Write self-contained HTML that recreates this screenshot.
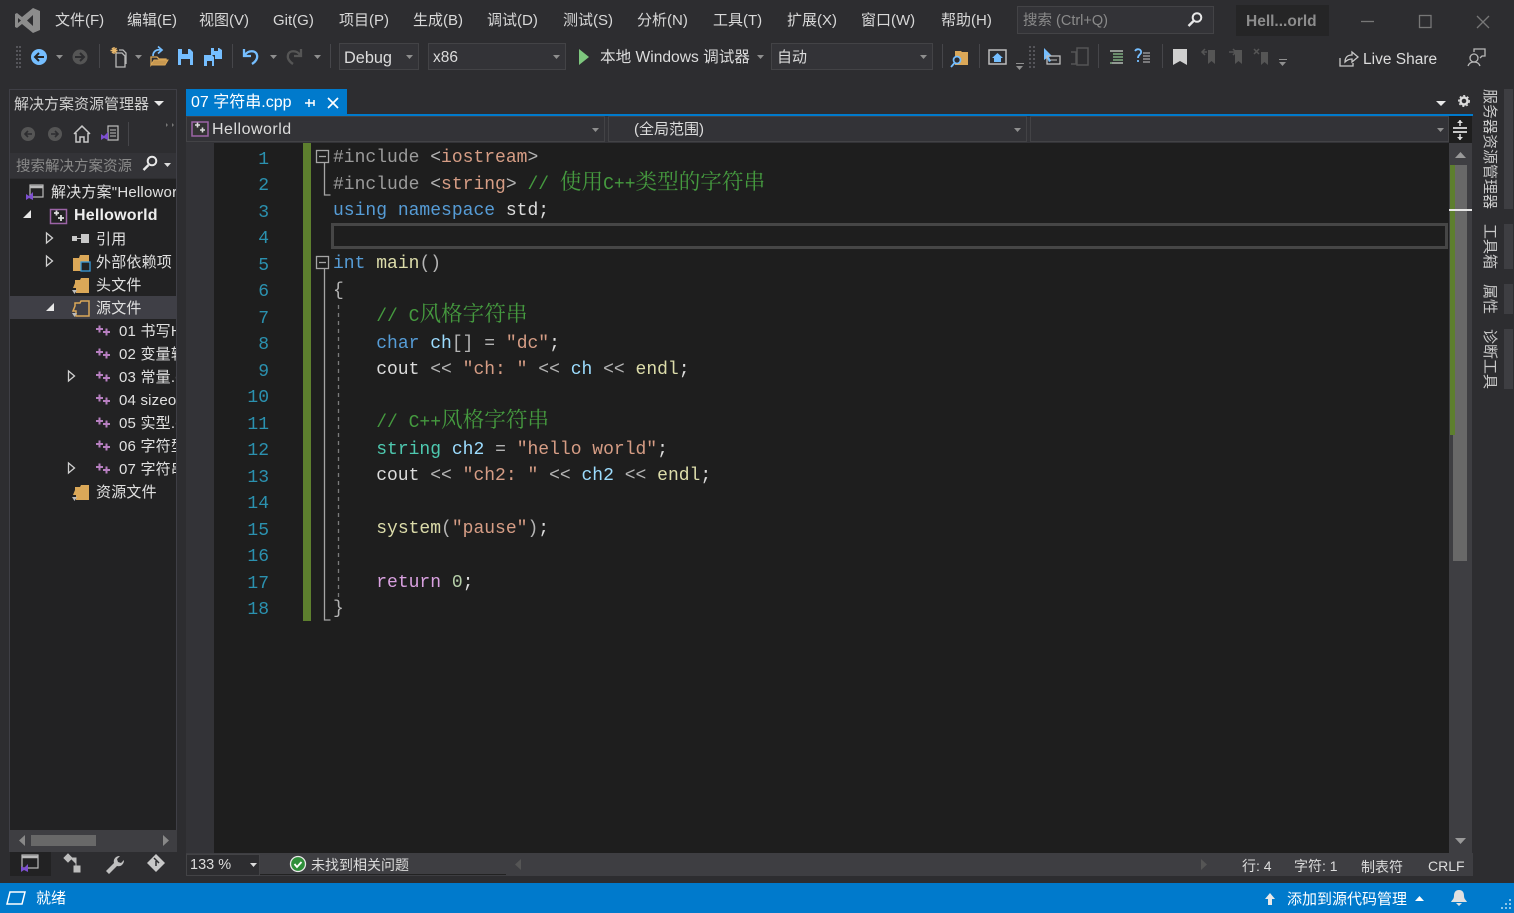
<!DOCTYPE html>
<html><head><meta charset="utf-8">
<style>
html,body{margin:0;padding:0;background:#2d2d30;width:1514px;height:913px;overflow:hidden}
body{position:relative;font-family:"Liberation Sans","Noto Sans CJK SC",sans-serif;color:#dcdcdc;font-size:14.5px}
.b{position:absolute}
.t{position:absolute;white-space:nowrap;line-height:20px}
.m .t{top:11px;color:#d8d8d8;font-size:15px}
.dd{position:absolute;background:#333337;border:1px solid #434346;box-sizing:border-box}
.r .t{color:#e0e0e0;font-size:15px;letter-spacing:.2px}
.l{position:absolute;left:333px;white-space:pre;font-family:"Liberation Mono","Noto Serif CJK SC",monospace;font-size:18px;line-height:27px;color:#dcdcdc}
.n{position:absolute;left:230px;width:39px;text-align:right;font-family:"Liberation Mono",monospace;font-size:18px;line-height:27px;color:#2b91af}
.k{color:#569cd6}.p{color:#9b9b9b}.s{color:#d69d85}.c{color:#459a3f}.f{color:#dcdcaa}.v{color:#9cdcfe}.y{color:#4ec9b0}.o{color:#b4b4b4}.q{color:#d8a0df}.u{color:#b5cea8}
.z{font-family:"Noto Serif CJK SC",serif;font-size:21.6px;line-height:0}
.v1{position:absolute;left:1480px;writing-mode:vertical-rl;text-orientation:sideways;font-size:15px;line-height:18px;color:#c8c8c8;white-space:nowrap}
</style></head><body>

<!-- solution panel -->
<div class="b" style="left:9px;top:89px;width:168px;height:763px;border:1px solid #3f3f46;box-sizing:border-box;border-bottom:0"></div>
<div class="b" style="left:10px;top:153px;width:166px;height:25px;background:#333337"></div>
<div class="b" style="left:10px;top:179px;width:166px;height:651px;background:#222223"></div>
<div class="b" style="left:10px;top:296px;width:166px;height:23px;background:#3f3f46"></div>
<div class="b" style="left:10px;top:830px;width:167px;height:22px;background:#3e3e42"></div>
<div class="b" style="left:31px;top:835px;width:65px;height:11px;background:#686868"></div>
<div class="b" style="left:10px;top:852px;width:41px;height:24px;background:#222223"></div>

<!-- document well -->
<div class="b" style="left:186px;top:89px;width:161px;height:25px;background:#007acc"></div>
<div class="b" style="left:186px;top:114px;width:1287px;height:2px;background:#007acc"></div>
<div class="b" style="left:186px;top:116px;width:1263px;height:27px;background:#333337"></div>
<div class="dd" style="left:186px;top:116px;width:419px;height:26px"></div>
<div class="dd" style="left:608px;top:116px;width:419px;height:26px"></div>
<div class="dd" style="left:1030px;top:116px;width:419px;height:26px"></div>
<div class="b" style="left:1449px;top:116px;width:23px;height:27px;background:#1e1e1e"></div>
<div class="b" style="left:186px;top:143px;width:28px;height:710px;background:#333337"></div>
<div class="b" style="left:214px;top:143px;width:1235px;height:710px;background:#1e1e1e"></div>
<div class="b" style="left:303px;top:143px;width:8px;height:478px;background:#5d7f2e"></div>
<div class="b" style="left:331px;top:223px;width:1117px;height:26px;border:3px solid #464646;box-sizing:border-box"></div>

<!-- scrollbar -->
<div class="b" style="left:1449px;top:143px;width:23px;height:710px;background:#3e3e42"></div>
<div class="b" style="left:1453px;top:165px;width:14px;height:396px;background:#686868"></div>
<div class="b" style="left:1450px;top:165px;width:5px;height:270px;background:#5d7f2e"></div>
<div class="b" style="left:1449px;top:209px;width:23px;height:2px;background:#e8e8e8"></div>

<!-- bottom bar -->
<div class="b" style="left:186px;top:853px;width:1287px;height:23px;background:#3e3e42"></div>
<div class="b" style="left:186px;top:854px;width:74px;height:22px;background:#2d2d30;border:1px solid #434346;box-sizing:border-box"></div>
<div class="b" style="left:260px;top:874px;width:246px;height:1px;background:#222"></div>

<!-- status -->
<div class="b" style="left:0;top:883px;width:1514px;height:30px;background:#007acc"></div>

<!-- top widgets -->
<div class="dd" style="left:1017px;top:6px;width:197px;height:28px"></div>
<div class="b" style="left:1236px;top:5px;width:93px;height:31px;background:#252526"></div>
<div class="dd" style="left:339px;top:43px;width:80px;height:27px"></div>
<div class="dd" style="left:428px;top:43px;width:138px;height:27px"></div>
<div class="dd" style="left:771px;top:43px;width:162px;height:27px"></div>

<!-- right strips -->
<div class="b" style="left:1504px;top:89px;width:9px;height:120px;background:#3e3e42"></div>
<div class="b" style="left:1504px;top:224px;width:9px;height:45px;background:#3e3e42"></div>
<div class="b" style="left:1504px;top:284px;width:9px;height:30px;background:#3e3e42"></div>
<div class="b" style="left:1504px;top:329px;width:9px;height:60px;background:#3e3e42"></div>

<!-- icons -->
<svg class="b" style="left:0;top:0" width="1514" height="913" viewBox="0 0 1514 913" fill="none">
<!-- logo -->
<path fill-rule="evenodd" fill="#8c8c8c" d="M33 8l7 3v19l-7 3-11-9-5 4-2-1V14l2-1 5 4zM33 15l-6 5.500 6 5.500zM18 18v5l3-2.500z"/>
<!-- gripper -->
<g fill="#55555a"><rect x="16" y="46" width="2" height="2"/><rect x="19" y="46" width="2" height="2"/><rect x="16" y="50" width="2" height="2"/><rect x="19" y="50" width="2" height="2"/><rect x="16" y="54" width="2" height="2"/><rect x="19" y="54" width="2" height="2"/><rect x="16" y="58" width="2" height="2"/><rect x="19" y="58" width="2" height="2"/><rect x="16" y="62" width="2" height="2"/><rect x="19" y="62" width="2" height="2"/><rect x="16" y="66" width="2" height="2"/><rect x="19" y="66" width="2" height="2"/>
<rect x="1029" y="46" width="2" height="2"/><rect x="1033" y="46" width="2" height="2"/><rect x="1029" y="50" width="2" height="2"/><rect x="1033" y="50" width="2" height="2"/><rect x="1029" y="54" width="2" height="2"/><rect x="1033" y="54" width="2" height="2"/><rect x="1029" y="58" width="2" height="2"/><rect x="1033" y="58" width="2" height="2"/><rect x="1029" y="62" width="2" height="2"/><rect x="1033" y="62" width="2" height="2"/><rect x="1029" y="66" width="2" height="2"/><rect x="1033" y="66" width="2" height="2"/></g>
<!-- separators -->
<g stroke="#46464a"><path d="M99.500 44v24M232.500 44v24M330.500 44v24M942.500 44v24M979.500 44v24M1098.500 44v24M1162.500 44v24M128.500 122v24"/></g>
<!-- nav -->
<circle cx="39" cy="57" r="8" fill="#75beff"/><path d="M44 57h-8M39 53l-4 4 4 4" stroke="#252526" stroke-width="2"/>
<circle cx="80" cy="57" r="7.500" fill="#555"/><path d="M75 57h8M80 53l4 4-4 4" stroke="#2d2d30" stroke-width="2"/>
<!-- small arrows -->
<g fill="#8f8f8f"><path d="M56 55h7l-3.500 4zM135 55h7l-3.500 4zM270 55h7l-3.500 4zM314 55h7l-3.500 4zM406 55h7l-3.500 4zM553 55h7l-3.500 4zM757 55h7l-3.500 4zM920 55h7l-3.500 4zM592 128h7l-3.500 4zM1014 128h7l-3.500 4zM1437 128h7l-3.500 4z"/></g>
<!-- new project -->
<path d="M116 53h6l3 3v11h-9zM119 50h4l3 3v11" stroke="#b8b8b8" stroke-width="1.300"/><path d="M114 47v7M110.500 50.500h7M112 48l4.500 5M116.500 48l-4.500 5" stroke="#e8b76b" stroke-width="1.400"/>
<!-- open -->
<path d="M151 57h6l2 2h7v3h-13l-2 3v-8z" stroke="#dba858" stroke-width="1.300"/><path d="M151 65l3-5h14l-3 5z" fill="#c89850" stroke="#dba858"/><path d="M153 56c0-5 4-7 8-6M158 46.500l4 3.500-4 3.500" stroke="#75beff" stroke-width="1.700"/>
<!-- save -->
<path d="M178 49h12l3 3v13h-15z" fill="#75beff"/><rect x="182" y="49" width="6" height="5" fill="#2d2d30"/><rect x="181" y="59" width="9" height="6" fill="#2d2d30"/>
<path d="M204 55h8l2 2v9h-10z" fill="#75beff"/><path d="M211 48h8l3 2v9h-7v-4h-4z" fill="#75beff"/><rect x="207" y="61" width="5" height="5" fill="#2d2d30"/><rect x="214" y="48" width="4" height="3" fill="#2d2d30"/>
<!-- undo/redo -->
<path d="M244 49v7h7M245 55c3-5 11-5 12 0 1 4-2 7-5 9" stroke="#75beff" stroke-width="2.300"/>
<path d="M301 49v7h-7M300 55c-3-5-11-5-12 0-1 4 2 7 5 9" stroke="#555" stroke-width="2.300"/>
<!-- run -->
<path d="M579 49l10 8-10 8z" fill="#7ec77e"/>
<!-- find in files -->
<path d="M955 53v-2h6l1 1h6v13h-13z" fill="#dba858"/><circle cx="957" cy="60" r="3.500" stroke="#75beff" stroke-width="1.700" fill="#2d2d30"/><path d="M954.500 63l-3.500 4" stroke="#75beff" stroke-width="1.800"/>
<!-- home window -->
<rect x="989" y="50" width="17" height="14" stroke="#bdbdbd" stroke-width="1.500"/><path d="M992 58l5.500-5 5.500 5h-2v4h-7v-4z" fill="#75beff"/>
<g fill="#8f8f8f"><path d="M1016 63h8v1h-8zM1016 66h7l-3.500 4zM1279 59h8v1h-8zM1279 62h7l-3.500 4z"/></g>
<!-- pointer-box -->
<path d="M1044 48v12l3-2 2 4 2-1-2-4 3-1z" fill="#75beff"/><rect x="1047" y="56" width="13" height="8" stroke="#bdbdbd" stroke-width="1.300"/><path d="M1050 60h7" stroke="#bdbdbd"/>
<path d="M1071 52h5v12h-5M1077 48h11v17h-11z" stroke="#555" stroke-width="1.500"/>
<!-- comment lines -->
<path d="M1110 51h13M1113 54h10M1113 57h10M1113 60h10M1110 63h13" stroke="#8fc78f" stroke-width="1.300"/><path d="M1110 51h13M1112 63h11" stroke="#ddd"/>
<path d="M1135 51c2-3 7-2 6 2-1 2-3 2-3 5M1138 60v2" stroke="#75beff" stroke-width="1.800"/><path d="M1143 53h7M1143 56h7M1143 59h7M1143 62h7" stroke="#c8c8c8"/>
<!-- bookmarks -->
<path d="M1173 49h14v16l-7-4-7 4z" fill="#d0d0d0"/>
<path d="M1208 50h7v14l-3.500-3-3.500 3zM1235 50h7v14l-3.500-3-3.500 3zM1261 52h7v13l-3.500-3-3.500 3z" fill="#555"/>
<path d="M1207 52h-5M1205 49l-3 3 3 3M1229 52h6M1233 49l3 3-3 3M1254 49l5 5M1259 49l-5 5" stroke="#555" stroke-width="1.500"/>
<!-- live share -->
<path d="M1340 58v8h13v-3M1345 62c0-5 3-7 7-7v-3l6 5-6 5v-3c-3 0-5 1-7 3z" stroke="#c8c8c8" stroke-width="1.300"/>
<!-- feedback -->
<circle cx="1474" cy="58" r="4" stroke="#b8b8b8" stroke-width="1.300"/><path d="M1468 66c1-3 3-4 6-4s5 1 6 4M1474 52v-3h11v7h-3l-2 2" stroke="#b8b8b8" stroke-width="1.300"/>
<!-- window controls -->
<path d="M1361 21.500h13" stroke="#777" stroke-width="1.300"/><rect x="1419.500" y="15.500" width="11.500" height="12" stroke="#777" stroke-width="1.300"/><path d="M1477 16l12 12M1489 16l-12 12" stroke="#777" stroke-width="1.300"/>
<!-- search -->
<circle cx="1197" cy="17.500" r="4.300" stroke="#e8e8e8" stroke-width="2"/><path d="M1193.500 21l-5 5" stroke="#e8e8e8" stroke-width="2.400"/>
<!-- solution title -->
<path d="M154 101h10l-5 5z" fill="#e8e8e8"/>
<circle cx="28" cy="134" r="7" fill="#555"/><path d="M32 134h-7M28 131l-3 3 3 3" stroke="#2d2d30" stroke-width="1.600"/>
<circle cx="55" cy="134" r="7" fill="#555"/><path d="M51 134h7M55 131l3 3-3 3" stroke="#2d2d30" stroke-width="1.600"/>
<path d="M74 134l8-8 8 8M76 133v9h4v-5h4v5h4v-9" stroke="#c8c8c8" stroke-width="1.500"/>
<rect x="108" y="126" width="10" height="14" stroke="#bdbdbd" stroke-width="1.200"/><path d="M110 130h6M110 133h6M110 136h6" stroke="#bdbdbd"/><path d="M101 134l3 2 4-4v8l-4-2-3 2z" fill="#7d4fd0"/>
<path d="M166 123l2 2-2 2zM172 123l2 2-2 2z" fill="#777"/>
<circle cx="152" cy="161" r="4.300" stroke="#e8e8e8" stroke-width="2"/><path d="M148.500 165l-5 5" stroke="#e8e8e8" stroke-width="2.400"/><path d="M164 163h7l-3.500 4z" fill="#ddd"/>
<!-- tab pin + close -->
<path d="M305 103h9M309 99v8M314 100v6" stroke="#fff" stroke-width="1.500"/><path d="M328 98l10 10M338 98l-10 10" stroke="#fff" stroke-width="1.700"/>
<!-- nav project icon -->
<rect x="192" y="122" width="16" height="14" stroke="#9c64a6" stroke-width="1.500" fill="#333"/><path d="M195 125h5M197.500 122.500v5M200 130h5M202.500 127.500v5" stroke="#ddd" stroke-width="1.600"/>
<!-- top right -->
<path d="M1436 101h10l-5 5z" fill="#e8e8e8"/><circle cx="1464" cy="101" r="3.500" stroke="#ddd" stroke-width="2.400"/><circle cx="1464" cy="101" r="5.300" stroke="#ddd" stroke-width="1.300" stroke-dasharray="2 2"/>
<path d="M1453 128h14M1453 132h14" stroke="#fff" stroke-width="1.500"/><path d="M1460 120v6M1460 134v6" stroke="#ddd" stroke-width="1.500"/><path d="M1457 123l3-3 3 3M1457 137l3 3 3-3" fill="#ddd"/>
<path d="M1455 158l5.500-6 5.500 6zM1455 838h11l-5.500 6z" fill="#999"/>
<!-- fold markers -->
<g stroke="#a5a5a5" stroke-width="1.300"><rect x="316.500" y="150.500" width="12" height="12" fill="#1e1e1e"/><path d="M319 156.500h7"/><path d="M324.500 163v32h6"/><rect x="316.500" y="256.500" width="12" height="12" fill="#1e1e1e"/><path d="M319 262.500h7"/><path d="M324.500 269v351h6"/></g>
<path d="M338.500 305V600" stroke="#7a7a7a" stroke-dasharray="4 4" stroke-width="1.300"/>
<!-- tree: solution -->
<rect x="30" y="185" width="13" height="12" stroke="#bbb" stroke-width="1.200"/><path d="M30 187h13" stroke="#bbb" stroke-width="2.500"/><path d="M26 194l3 2 4-4v8l-4-2-3 2z" fill="#7d4fd0"/>
<path d="M31 210v8h-8z" fill="#e8e8e8"/>
<rect x="50.500" y="209.500" width="16" height="14" stroke="#9c64a6" stroke-width="1.500"/><path d="M54 213h5M56.500 210.500v5M58 218h6M61 215v6" stroke="#ddd" stroke-width="1.800"/>
<g stroke="#d0d0d0" stroke-width="1.300"><path d="M46.500 233v10l6-5zM46.500 256v10l6-5zM68.500 371v10l6-5zM68.500 463v10l6-5z"/></g>
<path d="M54 303v8h-8z" fill="#e8e8e8"/>
<rect x="72" y="236" width="5" height="5" fill="#c8c8c8"/><rect x="81" y="234" width="8" height="9" fill="#c8c8c8"/><path d="M77 238.500h4" stroke="#c8c8c8"/>
<g fill="#dba858"><path d="M73 258h6l1-3h9v16H73z"/><path d="M75 283v-3h5l1-2h8v15H76v-5h-3z"/><path d="M75 306v-3h5l1-2h8v15H76v-5h-3z" fill="none" stroke="#dba858" stroke-width="1.500"/><path d="M75 490v-3h5l1-2h8v15H76v-5h-3z"/></g>
<rect x="81" y="262" width="9" height="9" fill="#222" stroke="#3a9ad9" stroke-width="1.300"/>
<g fill="#bbb"><path d="M72 290l2.500 4 2.500-4zM72 313l2.500 4 2.500-4zM72 497l2.500 4 2.500-4z"/></g>
<!-- cpp pluses -->
<g stroke="#b77fc0" stroke-width="2">
<path d="M96 329h7M99.500 325.500v7M103 332h7M106.500 328.500v7"/>
<path d="M96 352h7M99.500 348.500v7M103 355h7M106.500 351.500v7"/>
<path d="M96 375h7M99.500 371.500v7M103 378h7M106.500 374.500v7"/>
<path d="M96 398h7M99.500 394.500v7M103 401h7M106.500 397.500v7"/>
<path d="M96 421h7M99.500 417.500v7M103 424h7M106.500 420.500v7"/>
<path d="M96 444h7M99.500 440.500v7M103 447h7M106.500 443.500v7"/>
<path d="M96 467h7M99.500 463.500v7M103 470h7M106.500 466.500v7"/>
</g>
<!-- h scroll arrows -->
<path d="M25 835v11l-6-5.500zM163 835v11l6-5.500z" fill="#888"/>
<!-- left tabs -->
<rect x="22" y="855" width="16" height="13" stroke="#bbb" stroke-width="1.200"/><path d="M22 857h16" stroke="#bbb" stroke-width="2.500"/><path d="M21 866l3 2 4-4v8l-4-2-3 2z" fill="#7d4fd0"/>
<path d="M64 858l4-4 4 4-4 4zM74 866h6v6h-6zM70 858h6v6M76 858v8" fill="#bdbdbd" stroke="#bdbdbd"/>
<path d="M106 871l8-8c-1-3 1-7 6-7l-3 3 1 3 3 1 3-3c0 5-4 7-7 6l-8 8z" fill="#c0c0c0"/>
<path d="M156 854l9 9-9 9-9-9z" fill="#c8c8c8"/><path d="M154 858l5 5M156 866v-5" stroke="#2d2d30" stroke-width="1.500"/>
<!-- bottom bar -->
<path d="M250 863h7l-3.500 4z" fill="#ddd"/>
<circle cx="298" cy="864" r="7.500" fill="#2f8f3a" stroke="#e8e8e8" stroke-width="1.300"/><path d="M294.500 864l2.500 3 4.500-5" stroke="#fff" stroke-width="1.800"/>
<path d="M521 859v11l-6-5.500zM1201 859v11l6-5.500z" fill="#555"/>
<!-- status -->
<path d="M10 892h15l-3 12H7z" stroke="#fff" stroke-width="1.500"/>
<path d="M1270 893l-5 6h3v6h4v-6h3z" fill="#e8e8e8"/>
<path d="M1415 901l4.500-5 4.500 5z" fill="#fff"/>
<path d="M1459 890c-4 0-5 3-5 6 0 3-2 4-3 6h16c-1-2-3-3-3-6 0-3-1-6-5-6zM1456 903h6l-3 3z" fill="#e0e0e0"/>
<g fill="#8cc4e8"><rect x="1509" y="899" width="2" height="2"/><rect x="1505" y="903" width="2" height="2"/><rect x="1509" y="903" width="2" height="2"/><rect x="1501" y="907" width="2" height="2"/><rect x="1505" y="907" width="2" height="2"/><rect x="1509" y="907" width="2" height="2"/></g>
</svg>

<!-- menu -->
<div class="m">
<div class="t" style="left:55px">文件(F)</div><div class="t" style="left:127px">编辑(E)</div><div class="t" style="left:199px">视图(V)</div><div class="t" style="left:273px">Git(G)</div><div class="t" style="left:339px">项目(P)</div><div class="t" style="left:413px">生成(B)</div><div class="t" style="left:487px">调试(D)</div><div class="t" style="left:563px">测试(S)</div><div class="t" style="left:637px">分析(N)</div><div class="t" style="left:713px">工具(T)</div><div class="t" style="left:787px">扩展(X)</div><div class="t" style="left:861px">窗口(W)</div><div class="t" style="left:941px">帮助(H)</div>
</div>
<div class="t" style="left:1023px;top:11px;color:#8a8a8a">搜索 (Ctrl+Q)</div>
<div class="t" style="left:1246px;top:12px;color:#8c8c8c;font-weight:bold;font-size:15.500px">Hell...orld</div>
<!-- toolbar text -->
<div class="t" style="left:344px;top:48px;font-size:16.300px">Debug</div>
<div class="t" style="left:433px;top:48px;font-size:15.500px">x86</div>
<div class="t" style="left:600px;top:48px;font-size:15.600px">本地 Windows 调试器</div>
<div class="t" style="left:777px;top:48px;font-size:15px">自动</div>
<div class="t" style="left:1363px;top:50px;font-size:15.500px">Live Share</div>
<!-- solution -->
<div class="t" style="left:14px;top:95px;color:#d0d0d0;font-size:15px">解决方案资源管理器</div>
<div class="t" style="left:16px;top:157px;color:#8a8a8a">搜索解决方案资源</div>
<div class="b r" style="left:10px;top:179px;width:166px;height:330px;overflow:hidden">
<div class="t" style="left:41px;top:4px">解决方案"Helloworld"</div>
<div class="t" style="left:64px;top:27px;font-weight:bold;color:#eee;font-size:16px">Helloworld</div>
<div class="t" style="left:86px;top:51px">引用</div>
<div class="t" style="left:86px;top:74px">外部依赖项</div>
<div class="t" style="left:86px;top:97px">头文件</div>
<div class="t" style="left:86px;top:120px">源文件</div>
<div class="t" style="left:109px;top:143px">01 书写Helloworld</div>
<div class="t" style="left:109px;top:166px">02 变量转换.cpp</div>
<div class="t" style="left:109px;top:189px">03 常量.cpp</div>
<div class="t" style="left:109px;top:212px">04 sizeof.cpp</div>
<div class="t" style="left:109px;top:235px">05 实型.cpp</div>
<div class="t" style="left:109px;top:258px">06 字符型.cpp</div>
<div class="t" style="left:109px;top:281px">07 字符串.cpp</div>
<div class="t" style="left:86px;top:304px">资源文件</div>
</div>
<!-- tab/nav -->
<div class="t" style="left:191px;top:93px;color:#fff;font-size:16px">07 字符串.cpp</div>
<div class="t" style="left:212px;top:120px;font-size:16px;letter-spacing:.5px">Helloworld</div>
<div class="t" style="left:634px;top:120px;font-size:15px">(全局范围)</div>

<!-- line numbers -->
<div class="n" style="top:146.500px">1</div><div class="n" style="top:173px">2</div><div class="n" style="top:199.500px">3</div><div class="n" style="top:226px">4</div><div class="n" style="top:252.500px">5</div><div class="n" style="top:279px">6</div><div class="n" style="top:305.500px">7</div><div class="n" style="top:332px">8</div><div class="n" style="top:358.500px">9</div><div class="n" style="top:385px">10</div><div class="n" style="top:411.500px">11</div><div class="n" style="top:438px">12</div><div class="n" style="top:464.500px">13</div><div class="n" style="top:491px">14</div><div class="n" style="top:517.500px">15</div><div class="n" style="top:544px">16</div><div class="n" style="top:570.500px">17</div><div class="n" style="top:597px">18</div>

<!-- code -->
<div class="l" style="top:145px"><span class="p">#include</span> <span class="o">&lt;</span><span class="s">iostream</span><span class="o">&gt;</span></div>
<div class="l" style="top:171.500px"><span class="p">#include</span> <span class="o">&lt;</span><span class="s">string</span><span class="o">&gt;</span> <span class="c">// <span class="z">使用</span>C++<span class="z">类型的字符串</span></span></div>
<div class="l" style="top:198px"><span class="k">using</span> <span class="k">namespace</span> std;</div>
<div class="l" style="top:251px"><span class="k">int</span> <span class="f">main</span><span class="o">()</span></div>
<div class="l" style="top:277.500px"><span class="o">{</span></div>
<div class="l" style="top:304px">    <span class="c">// C<span class="z">风格字符串</span></span></div>
<div class="l" style="top:330.500px">    <span class="k">char</span> <span class="v">ch</span><span class="o">[]</span> <span class="o">=</span> <span class="s">"dc"</span>;</div>
<div class="l" style="top:357px">    cout <span class="o">&lt;&lt;</span> <span class="s">"ch: "</span> <span class="o">&lt;&lt;</span> <span class="v">ch</span> <span class="o">&lt;&lt;</span> <span class="f">endl</span>;</div>
<div class="l" style="top:410px">    <span class="c">// C++<span class="z">风格字符串</span></span></div>
<div class="l" style="top:436.500px">    <span class="y">string</span> <span class="v">ch2</span> <span class="o">=</span> <span class="s">"hello world"</span>;</div>
<div class="l" style="top:463px">    cout <span class="o">&lt;&lt;</span> <span class="s">"ch2: "</span> <span class="o">&lt;&lt;</span> <span class="v">ch2</span> <span class="o">&lt;&lt;</span> <span class="f">endl</span>;</div>
<div class="l" style="top:516px">    <span class="f">system</span><span class="o">(</span><span class="s">"pause"</span><span class="o">)</span>;</div>
<div class="l" style="top:569.500px">    <span class="q">return</span> <span class="u">0</span>;</div>
<div class="l" style="top:595.500px"><span class="o">}</span></div>

<!-- bottom -->
<div class="t" style="left:190px;top:855px">133 %</div>
<div class="t" style="left:311px;top:855px;font-size:14px">未找到相关问题</div>
<div class="t" style="left:1242px;top:856px;font-size:14px">行: 4</div>
<div class="t" style="left:1294px;top:856px;font-size:14px">字符: 1</div>
<div class="t" style="left:1361px;top:857px;font-size:14px">制表符</div>
<div class="t" style="left:1428px;top:856px;font-size:14px">CRLF</div>
<div class="t" style="left:36px;top:889px;color:#fff;font-size:15px">就绪</div>
<div class="t" style="left:1287px;top:890px;color:#fff;font-size:15px">添加到源代码管理</div>

<!-- vertical -->
<div class="v1" style="top:89px">服务器资源管理器</div>
<div class="v1" style="top:224px">工具箱</div>
<div class="v1" style="top:284px">属性</div>
<div class="v1" style="top:329px">诊断工具</div>
</body></html>
